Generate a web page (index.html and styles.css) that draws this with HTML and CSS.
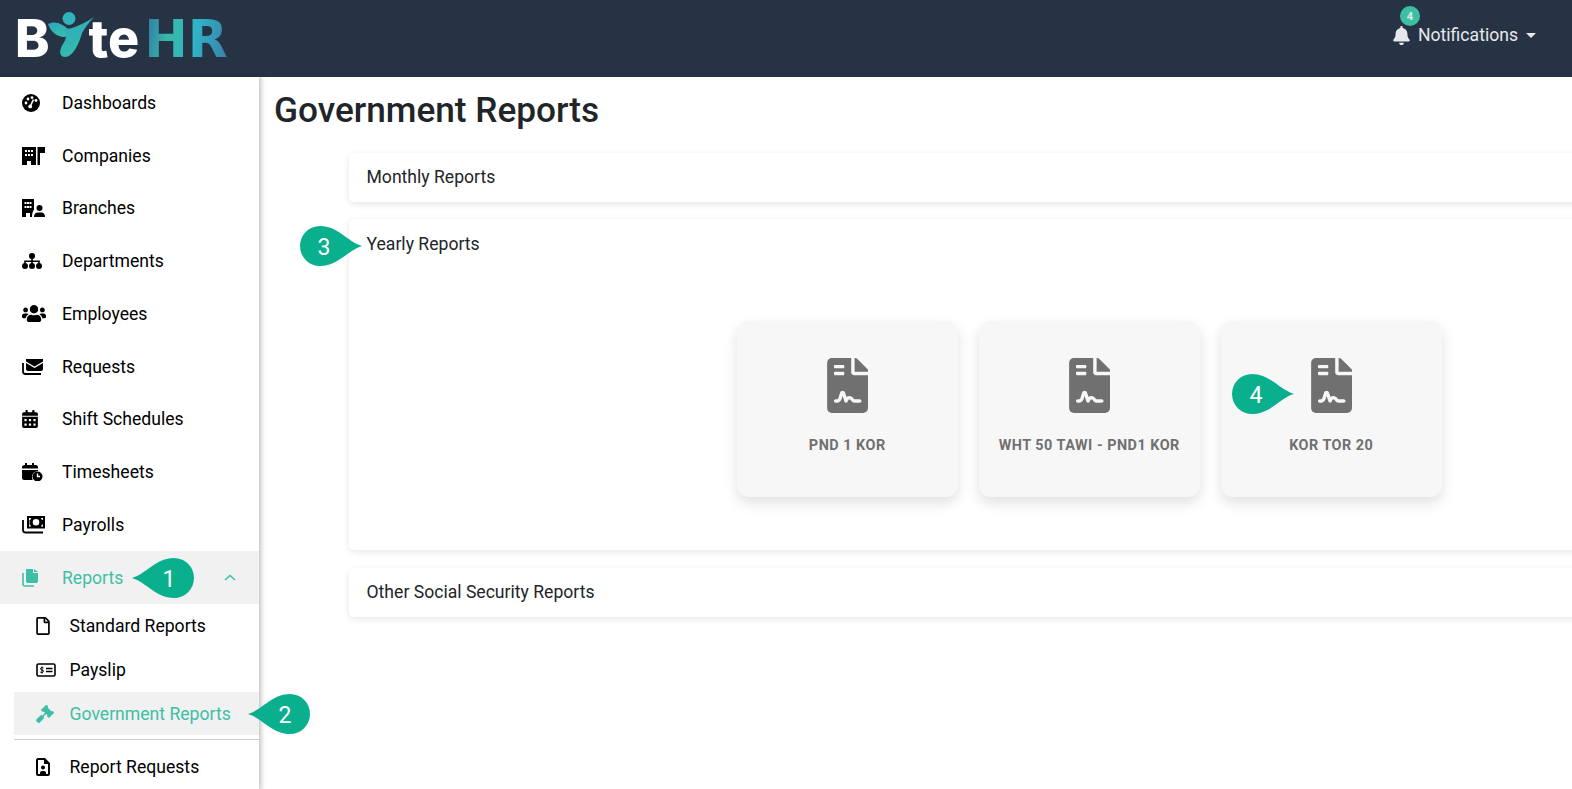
FILE: index.html
```html
<!DOCTYPE html>
<html lang="en">

<head>
    <meta charset="UTF-8">
    <meta name="viewport" content="width=device-width, initial-scale=1.0">
    <title>Government Reports</title>
    <link rel="stylesheet" href="styles.css">
</head>

<body>
    <header class="topbar">
        <div class="logo">
            <span class="logoWhite">B</span>
            <svg class="logoFigure" viewBox="50 12 47 46" width="47" height="46">
                <defs>
                    <linearGradient id="figureGrad" x1="0" y1="0" x2="0.6" y2="1">
                        <stop offset="0" stop-color="#2aa6c4" />
                        <stop offset="1" stop-color="#36bfa8" />
                    </linearGradient>
                </defs>
                <circle cx="72" cy="18.500" r="6.500" fill="#2fb3bd" />
                <path d="M51 24C58 20 66 24 72 30C76 34 72 37 67 37C60 37 54 32 51 24Z" fill="url(#figureGrad)" />
                <path d="M97 17C92 22 88 28 85 33C82 44 76 57 68 57C62 57 62 50 66 44C70 38 70 33 66 29C74 30 86 24 97 17Z" fill="url(#figureGrad)" />
            </svg>
            <span class="logoWhite logoTe">te</span>
            <span class="logoColor">HR</span>
        </div>
        <div class="notify">
            <span class="notifyBadge">4</span>
            <svg class="bell" viewBox="0 0 448 512">
                <path d="M224 512c35.32 0 63.97-28.65 63.97-64H160.03c0 35.35 28.65 64 63.97 64zm215.39-149.71c-19.32-20.76-55.47-51.99-55.47-154.29 0-77.7-54.48-139.9-127.94-155.16V32c0-17.67-14.32-32-31.98-32s-31.98 14.33-31.98 32v20.84C118.56 68.1 64.08 130.3 64.08 208c0 102.3-36.15 133.53-55.47 154.29-6 6.45-8.66 14.16-8.61 21.71.11 16.4 12.98 32 32.1 32h383.8c19.12 0 32-15.6 32.1-32 .05-7.55-2.61-15.27-8.61-21.71z" />
            </svg>
            <span>Notifications</span>
            <span class="caret"></span>
        </div>
    </header>

    <div class="layout">
        <aside class="sidebar">
            <a class="navItem">
                <span class="navIcon">
                    <svg width="18" height="18" viewBox="0 0 18 18">
                        <circle cx="9" cy="9" r="9" />
                        <circle cx="4" cy="9" r="1.4" fill="#fff" />
                        <circle cx="6" cy="5" r="1.4" fill="#fff" />
                        <circle cx="10" cy="3.6" r="1.4" fill="#fff" />
                        <circle cx="14" cy="6.5" r="1.4" fill="#fff" />
                        <path d="M11.5 5.5L8.6 11.5" stroke="#fff" stroke-width="1.6" />
                        <circle cx="8.2" cy="12.4" r="1.9" fill="#fff" />
                    </svg>
                </span>
                Dashboards
            </a>
            <a class="navItem">
                <span class="navIcon">
                    <svg width="23" height="18" viewBox="0 0 23 18">
                        <path fill-rule="evenodd" d="M0 0H14V18H9V14H5V18H0ZM3 3V5H5V3ZM6 3V5H8V3ZM9 3V5H11V3ZM3 7V9H5V7ZM6 7V9H8V7ZM9 7V9H11V7Z" />
                        <path d="M15.5 0H23V6H18V18H15.5Z" />
                    </svg>
                </span>
                Companies
            </a>
            <a class="navItem">
                <span class="navIcon">
                    <svg width="23" height="18" viewBox="0 0 23 18">
                        <path fill-rule="evenodd" d="M0 0H12V10.5C11 12 10 14 10 18H8V14H4V18H0ZM2.5 3V5H4.500V3ZM5 3V5H7V3ZM7.500 3V5H9.500V3ZM2.500 7V9H4.500V7ZM5 7V9H7V7ZM7.500 7V9H9.500V7Z" />
                        <circle cx="17.500" cy="9" r="3" />
                        <path d="M12 18C12 15 13.500 13.500 15.500 13.500H19.500C21.500 13.500 23 15 23 18Z" />
                    </svg>
                </span>
                Branches
            </a>
            <a class="navItem">
                <span class="navIcon">
                    <svg width="20" height="16" viewBox="0 0 20 16">
                        <circle cx="10" cy="3" r="3" />
                        <circle cx="3" cy="13" r="3" />
                        <circle cx="10" cy="13" r="3" />
                        <circle cx="17" cy="13" r="3" />
                        <path d="M9.200 5H10.800V7.500H17.800V11H16.200V9H10.800V11H9.200V9H3.800V11H2.200V7.500H9.200Z" />
                    </svg>
                </span>
                Departments
            </a>
            <a class="navItem">
                <span class="navIcon">
                    <svg width="24" height="17" viewBox="0 32 640 448">
                        <path d="M96 224c35.3 0 64-28.7 64-64s-28.7-64-64-64-64 28.7-64 64 28.7 64 64 64zm448 0c35.3 0 64-28.7 64-64s-28.7-64-64-64-64 28.7-64 64 28.7 64 64 64zm32 32h-64c-17.6 0-33.5 7.1-45.1 18.6 40.3 22.1 68.9 62 75.1 109.4h66c17.7 0 32-14.3 32-32v-32c0-35.3-28.7-64-64-64zm-256 0c61.9 0 112-50.1 112-112S381.900 32 320 32 208 82.100 208 144s50.100 112 112 112zm76.800 32h-8.300c-20.800 10-43.900 16-68.500 16s-47.600-6-68.500-16h-8.300C179.600 288 128 339.600 128 403.200V432c0 26.500 21.500 48 48 48h288c26.500 0 48-21.500 48-48v-28.800c0-63.600-51.600-115.200-115.200-115.200zm-223.700-13.400C161.500 263.100 145.600 256 128 256H64c-35.300 0-64 28.700-64 64v32c0 17.700 14.300 32 32 32h65.900c6.300-47.400 34.900-87.300 75.200-109.400z" />
                    </svg>
                </span>
                Employees
            </a>
            <a class="navItem">
                <span class="navIcon">
                    <svg width="21" height="16" viewBox="0 0 21 16">
                        <path d="M4 0H21V2.500L12.500 7.500L4 2.500Z" />
                        <path d="M4 4L12.500 9L21 4V10C21 11 20 12 19 12H6C5 12 4 11 4 10Z" />
                        <path d="M1 4V12.500C1 14 2 15 3.500 15H19" fill="none" stroke="#000" stroke-width="1.800" />
                    </svg>
                </span>
                Requests
            </a>
            <a class="navItem">
                <span class="navIcon">
                    <svg width="16" height="18" viewBox="0 0 448 512">
                        <path d="M0 464c0 26.5 21.5 48 48 48h352c26.5 0 48-21.5 48-48V192H0v272zm320-196c0-6.6 5.4-12 12-12h40c6.6 0 12 5.4 12 12v40c0 6.6-5.4 12-12 12h-40c-6.6 0-12-5.4-12-12v-40zm0 128c0-6.6 5.4-12 12-12h40c6.6 0 12 5.4 12 12v40c0 6.6-5.4 12-12 12h-40c-6.6 0-12-5.4-12-12v-40zM192 268c0-6.6 5.4-12 12-12h40c6.6 0 12 5.4 12 12v40c0 6.6-5.4 12-12 12h-40c-6.6 0-12-5.4-12-12v-40zm0 128c0-6.6 5.4-12 12-12h40c6.6 0 12 5.4 12 12v40c0 6.6-5.4 12-12 12h-40c-6.6 0-12-5.4-12-12v-40zM64 268c0-6.6 5.4-12 12-12h40c6.6 0 12 5.4 12 12v40c0 6.6-5.4 12-12 12H76c-6.6 0-12-5.4-12-12v-40zm0 128c0-6.6 5.4-12 12-12h40c6.6 0 12 5.4 12 12v40c0 6.6-5.4 12-12 12H76c-6.6 0-12-5.4-12-12v-40zM400 64h-48V16c0-8.8-7.2-16-16-16h-32c-8.8 0-16 7.2-16 16v48H160V16c0-8.8-7.2-16-16-16h-32c-8.8 0-16 7.2-16 16v48H48C21.5 64 0 85.5 0 112v48h448v-48c0-26.5-21.5-48-48-48z" />
                    </svg>
                </span>
                Shift Schedules
            </a>
            <a class="navItem">
                <span class="navIcon">
                    <svg width="21" height="18" viewBox="0 0 21 18">
                        <path d="M3 0H5V2H10V0H12V2H14C15 2 16 3 16 4V5.500H0V4C0 3 1 2 3 2Z" />
                        <path d="M0 7H16V8C12 8.500 10 11 10 14C10 15 10.300 16 10.700 17H2C1 17 0 16 0 15Z" />
                        <circle cx="15.500" cy="13.500" r="5" />
                        <path d="M15.500 10.500V13.500H18" fill="none" stroke="#fff" stroke-width="1.400" />
                    </svg>
                </span>
                Timesheets
            </a>
            <a class="navItem">
                <span class="navIcon">
                    <svg width="23" height="18" viewBox="0 0 23 18">
                        <path fill-rule="evenodd" d="M5 0H23V12.500H5ZM7 2V10.500H9C9 9.500 8 9 7.500 8.500V4C8.500 4 9 3 9 2ZM19 2C19 3 20 4 21 4V8.500C20 8.500 19 9.500 19 10.500H21V2ZM14 3A3.200 3.200 0 1 0 14 9.600A3.200 3.200 0 1 0 14 3Z" />
                        <path d="M1 4V14C1 15.500 2 16.500 3.500 16.500H21" fill="none" stroke="#000" stroke-width="1.800" />
                    </svg>
                </span>
                Payrolls
            </a>
            <a class="navItem navItemActive">
                <span class="navIcon">
                    <svg width="16" height="18" viewBox="0 0 16 18" fill="#3dbfa6">
                        <path d="M5 0H11V4H16V12C16 13.500 15 14 14 14H6.500C5 14 4 13.500 4 12V1C4 .5 4.500 0 5 0Z" />
                        <path d="M12 0L16 3H12Z" />
                        <path d="M1 4V15C1 16 2 17 3 17H12" fill="none" stroke="#3dbfa6" stroke-width="1.600" />
                    </svg>
                </span>
                Reports
                <svg class="chevron" width="12" height="7" viewBox="0 0 12 7">
                    <path d="M1 6L6 1.500L11 6" fill="none" stroke="#3dbfa6" stroke-width="1.500" />
                </svg>
            </a>
            <div class="subNav">
                <a class="subItem">
                    <span class="subIcon">
                        <svg width="14" height="18" viewBox="0 0 384 512">
                            <path d="M369.900 97.900L286 14C277 5 264.800-.1 252.100-.1H48C21.500 0 0 21.500 0 48v416c0 26.500 21.500 48 48 48h288c26.500 0 48-21.500 48-48V131.900c0-12.700-5.100-25-14.100-34zM332.100 128H256V51.900l76.100 76.100zM48 464V48h160v104c0 13.300 10.700 24 24 24h104v288H48z" />
                        </svg>
                    </span>
                    Standard Reports
                </a>
                <a class="subItem">
                    <span class="subIcon">
                        <svg width="20" height="14" viewBox="0 0 20 14">
                            <rect x="1" y="1" width="18" height="12" rx="1.500" fill="none" stroke="#000" stroke-width="1.600" />
                            <path d="M7.500 5C6 4 4.500 4.500 4.500 5.800C4.500 7.400 7.500 6.600 7.500 8.200C7.500 9.500 5.500 10 4.200 9M6 3.500V10.500" fill="none" stroke="#000" stroke-width="1" />
                            <path d="M10 5.500H16.500M10 8.500H16.500" stroke="#000" stroke-width="1.500" />
                        </svg>
                    </span>
                    Payslip
                </a>
                <a class="subItem subItemActive">
                    <span class="subIcon">
                        <svg width="18" height="18" viewBox="0 0 512 512" fill="#3dbfa6">
                            <path d="M504.971 199.362l-22.627-22.627c-9.373-9.373-24.569-9.373-33.941 0l-5.657 5.657L329.608 69.255l5.657-5.657c9.373-9.373 9.373-24.569 0-33.941L312.638 7.029c-9.373-9.373-24.569-9.373-33.941 0L154.246 131.480c-9.373 9.373-9.373 24.569 0 33.941l22.627 22.627c9.373 9.373 24.569 9.373 33.941 0l5.657-5.657 39.598 39.598-81.040 81.040-5.657-5.657c-12.497-12.497-32.758-12.497-45.255 0L9.373 412.118c-12.497 12.497-12.497 32.758 0 45.255l45.255 45.255c12.497 12.497 32.758 12.497 45.255 0l114.745-114.745c12.497-12.497 12.497-32.758 0-45.255l-5.657-5.657 81.040-81.040 39.598 39.598-5.657 5.657c-9.373 9.373-9.373 24.569 0 33.941l22.627 22.627c9.373 9.373 24.569 9.373 33.941 0l124.451-124.451c9.372-9.372 9.372-24.568 0-33.941z" />
                        </svg>
                    </span>
                    Government Reports
                </a>
                <hr class="subDivider">
                <a class="subItem">
                    <span class="subIcon">
                        <svg width="14" height="18" viewBox="0 0 14 18">
                            <path fill-rule="evenodd" d="M2 0H9L14 5V16C14 17 13 18 12 18H2C1 18 0 17 0 16V2C0 1 1 0 2 0ZM2 2V16H4V15C4 13.500 5 13 7 13C9 13 10 13.500 10 15V16H12V6H8V2ZM7 7.500A2 2 0 1 0 7 11.500A2 2 0 1 0 7 7.500Z" />
                        </svg>
                    </span>
                    Report Requests
                </a>
            </div>
        </aside>

        <main class="main">
            <h1 class="pageTitle">Government Reports</h1>

            <section class="panel">
                <div class="panelTitle">Monthly Reports</div>
            </section>

            <section class="panel panelOpen">
                <div class="panelTitle">Yearly Reports</div>
                <div class="cardRow">
                    <div class="reportCard">
                        <svg class="cardIcon" viewBox="0 0 384 512">
                            <path d="M224 136V0H24C10.700 0 0 10.700 0 24v464c0 13.300 10.700 24 24 24h336c13.300 0 24-10.700 24-24V160H248c-13.200 0-24-10.800-24-24zM64 72c0-4.420 3.580-8 8-8h80c4.420 0 8 3.580 8 8v16c0 4.420-3.580 8-8 8H72c-4.420 0-8-3.580-8-8V72zm0 64c0-4.420 3.580-8 8-8h80c4.420 0 8 3.580 8 8v16c0 4.420-3.580 8-8 8H72c-4.420 0-8-3.580-8-8v-16zm192.810 248H304c8.840 0 16 7.160 16 16s-7.160 16-16 16h-47.190c-16.450 0-31.270-9.140-38.640-23.860-2.950-5.920-8.090-6.520-10.170-6.520s-7.220.59-10.020 6.190l-7.670 15.340a15.986 15.986 0 0 1-14.310 8.840c-.38 0-.75-.02-1.140-.05-6.450-.45-12-4.750-14.030-10.890L144 354.590l-10.610 31.880c-5.890 17.660-22.380 29.530-41 29.530H80c-8.840 0-16-7.160-16-16s7.160-16 16-16h12.390c4.830 0 9.110-3.080 10.640-7.660l18.190-54.640c3.300-9.810 12.440-16.410 22.780-16.410s19.480 6.590 22.770 16.410l13.880 41.640c19.770-16.190 54.050-9.700 66 14.160 2.020 4.060 5.960 6.500 10.160 6.500zM377 105L279.100 7c-4.500-4.500-10.600-7-17-7H256v128h128v-6.100c0-6.300-2.500-12.400-7-16.900z" />
                        </svg>
                        <div class="cardLabel">PND 1 KOR</div>
                    </div>
                    <div class="reportCard">
                        <svg class="cardIcon" viewBox="0 0 384 512">
                            <path d="M224 136V0H24C10.700 0 0 10.700 0 24v464c0 13.300 10.700 24 24 24h336c13.300 0 24-10.700 24-24V160H248c-13.200 0-24-10.800-24-24zM64 72c0-4.420 3.580-8 8-8h80c4.420 0 8 3.580 8 8v16c0 4.420-3.580 8-8 8H72c-4.420 0-8-3.580-8-8V72zm0 64c0-4.420 3.580-8 8-8h80c4.420 0 8 3.580 8 8v16c0 4.420-3.580 8-8 8H72c-4.420 0-8-3.580-8-8v-16zm192.810 248H304c8.840 0 16 7.160 16 16s-7.160 16-16 16h-47.190c-16.450 0-31.270-9.140-38.640-23.860-2.950-5.920-8.090-6.520-10.170-6.520s-7.220.59-10.020 6.190l-7.670 15.340a15.986 15.986 0 0 1-14.310 8.840c-.38 0-.75-.02-1.140-.05-6.450-.45-12-4.750-14.030-10.890L144 354.590l-10.610 31.880c-5.890 17.660-22.380 29.530-41 29.530H80c-8.840 0-16-7.160-16-16s7.160-16 16-16h12.390c4.830 0 9.110-3.080 10.640-7.660l18.190-54.640c3.300-9.810 12.440-16.410 22.780-16.410s19.480 6.590 22.770 16.410l13.880 41.640c19.770-16.190 54.050-9.700 66 14.160 2.020 4.060 5.960 6.500 10.160 6.500zM377 105L279.100 7c-4.500-4.500-10.600-7-17-7H256v128h128v-6.100c0-6.300-2.500-12.400-7-16.900z" />
                        </svg>
                        <div class="cardLabel">WHT 50 TAWI - PND1 KOR</div>
                    </div>
                    <div class="reportCard">
                        <svg class="cardIcon" viewBox="0 0 384 512">
                            <path d="M224 136V0H24C10.700 0 0 10.700 0 24v464c0 13.300 10.700 24 24 24h336c13.300 0 24-10.700 24-24V160H248c-13.200 0-24-10.800-24-24zM64 72c0-4.420 3.580-8 8-8h80c4.420 0 8 3.580 8 8v16c0 4.420-3.580 8-8 8H72c-4.420 0-8-3.580-8-8V72zm0 64c0-4.420 3.580-8 8-8h80c4.420 0 8 3.580 8 8v16c0 4.420-3.580 8-8 8H72c-4.420 0-8-3.580-8-8v-16zm192.810 248H304c8.840 0 16 7.160 16 16s-7.160 16-16 16h-47.190c-16.450 0-31.270-9.140-38.640-23.860-2.950-5.920-8.090-6.520-10.170-6.520s-7.220.59-10.020 6.190l-7.670 15.340a15.986 15.986 0 0 1-14.310 8.840c-.38 0-.75-.02-1.140-.05-6.450-.45-12-4.750-14.030-10.890L144 354.590l-10.610 31.880c-5.890 17.660-22.380 29.530-41 29.530H80c-8.840 0-16-7.160-16-16s7.160-16 16-16h12.390c4.830 0 9.110-3.080 10.640-7.660l18.190-54.640c3.300-9.810 12.440-16.410 22.780-16.410s19.480 6.590 22.770 16.410l13.880 41.640c19.770-16.190 54.050-9.700 66 14.160 2.020 4.060 5.960 6.500 10.160 6.500zM377 105L279.100 7c-4.500-4.500-10.600-7-17-7H256v128h128v-6.100c0-6.300-2.500-12.400-7-16.900z" />
                        </svg>
                        <div class="cardLabel">KOR TOR 20</div>
                    </div>
                </div>
            </section>

            <section class="panel">
                <div class="panelTitle">Other Social Security Reports</div>
            </section>
        </main>
    </div>

    <!-- Step markers laid over the page -->
    <div class="callout calloutLeft" id="step1">
        <svg viewBox="0 0 62 40"><path d="M0 20C14 16 24 0 42 0A20 20 0 0 1 42 40C24 40 14 24 0 20Z" /></svg>
        <span>1</span>
    </div>
    <div class="callout calloutLeft" id="step2">
        <svg viewBox="0 0 62 40"><path d="M0 20C14 16 24 0 42 0A20 20 0 0 1 42 40C24 40 14 24 0 20Z" /></svg>
        <span>2</span>
    </div>
    <div class="callout calloutRight" id="step3">
        <svg viewBox="0 0 62 40"><path d="M62 20C48 16 38 0 20 0A20 20 0 0 0 20 40C38 40 48 24 62 20Z" /></svg>
        <span>3</span>
    </div>
    <div class="callout calloutRight" id="step4">
        <svg viewBox="0 0 62 40"><path d="M62 20C48 16 38 0 20 0A20 20 0 0 0 20 40C38 40 48 24 62 20Z" /></svg>
        <span>4</span>
    </div>
</body>

</html>
```

FILE: styles.css
```css
* {
    box-sizing: border-box;
}

html,
body {
    margin: 0;
    height: 789px;
    overflow: hidden;
}

body {
    font-family: Roboto, "Liberation Sans", sans-serif;
    font-size: 17.6px;
    color: #000;
    background-color: #fff;
    position: relative;
}

.topbar {
    height: 76.6px;
    background-color: #263345;
    display: flex;
    justify-content: space-between;
    align-items: flex-start;
}

.logo {
    display: flex;
    align-items: flex-start;
    margin-left: 15px;
    margin-top: 12px;
    font-family: Inter, sans-serif;
    font-weight: 800;
    font-size: 52px;
    line-height: 46px;
    height: 46px;
}

.logoWhite {
    color: #fff;
    padding-top: 4px;
}

.logoFigure {
    margin-left: -3px;
    flex-shrink: 0;
}

.logoTe {
    margin-left: -5px;
}

.logoColor {
    margin-left: 5px;
    padding-top: 4px;
    font-family: "DejaVu Sans", sans-serif;
    font-weight: 700;
    background: linear-gradient(100deg, #2f6fa8 0%, #38b8a6 30%, #2fb3c8 60%, #3a7fa5 100%);
    -webkit-background-clip: text;
    background-clip: text;
    color: transparent;
}

.notify {
    position: relative;
    display: flex;
    align-items: center;
    gap: 8px;
    height: 20px;
    margin-top: 25px;
    margin-right: 36px;
    color: #e6e8ea;
}

.bell {
    width: 17px;
    height: 19px;
    fill: #e6e8ea;
}

.notifyBadge {
    position: absolute;
    left: 7px;
    top: -19px;
    width: 20px;
    height: 20px;
    border-radius: 50%;
    background-color: #3dbfa6;
    color: #e6e8ea;
    font-size: 11px;
    font-weight: 700;
    display: flex;
    align-items: center;
    justify-content: center;
}

.caret {
    margin-left: 0;
    width: 0;
    height: 0;
    border-left: 5px solid transparent;
    border-right: 5px solid transparent;
    border-top: 5px solid #e6e8ea;
}

.layout {
    display: flex;
    height: 713px;
}

.sidebar {
    width: 259px;
    flex-shrink: 0;
    background-color: #fff;
    box-shadow: 2px 0 5px rgba(0, 0, 0, 0.25);
    position: relative;
}

.navItem {
    height: 52.75px;
    display: flex;
    align-items: center;
    padding-left: 22px;
}

.navIcon {
    width: 40px;
    flex-shrink: 0;
    display: flex;
    align-items: center;
}

.navItemActive {
    background-color: #f1f1f1;
    color: #3dbfa6;
}

.chevron {
    margin-left: auto;
    margin-right: 23px;
}

.subItem {
    height: 43.8px;
    display: flex;
    align-items: center;
    padding-left: 36px;
}

.subIcon {
    width: 33.5px;
    flex-shrink: 0;
    display: flex;
    align-items: center;
}

.subItemActive {
    margin-left: 14px;
    padding-left: 22px;
    background-color: #f1f1f1;
    color: #3dbfa6;
}

.subDivider {
    margin: 4px 0 5px 14px;
    border: none;
    border-top: 1px solid #ccc;
}

.main {
    flex: 1;
    min-width: 0;
    padding-left: 15px;
}

.pageTitle {
    margin: 0;
    padding-top: 12px;
    height: 76.2px;
    font-size: 35.2px;
    font-weight: 500;
    line-height: 42px;
    color: #212529;
}

.panel {
    margin-left: 75px;
    margin-right: -40px;
    margin-bottom: 17px;
    height: 49px;
    background-color: #fff;
    border-radius: 5px;
    box-shadow: 0 2px 6px rgba(38, 51, 69, 0.12);
}

.panelOpen {
    height: 331px;
    margin-bottom: 18px;
}

.panelTitle {
    height: 48px;
    padding-left: 17.5px;
    display: flex;
    align-items: center;
    color: #212529;
}

.panelOpen .panelTitle {
    height: 50px;
}

.cardRow {
    display: flex;
    gap: 21.5px;
    padding-top: 52px;
    padding-left: 388px;
}

.reportCard {
    width: 220.5px;
    height: 176px;
    background-color: #f7f7f7;
    border-radius: 12px;
    box-shadow: 0 6px 14px rgba(0, 0, 0, 0.12);
    padding-top: 37px;
    display: flex;
    flex-direction: column;
    align-items: center;
}

.cardIcon {
    width: 41.5px;
    height: 55px;
    fill: #707070;
    border-radius: 5px;
    overflow: hidden;
}

.cardLabel {
    margin-top: 24px;
    font-size: 14.4px;
    font-weight: 700;
    letter-spacing: 0.5px;
    color: #707070;
}

.callout {
    position: absolute;
    width: 62px;
    height: 40px;
    color: #fff;
    font-size: 23px;
}

.callout svg {
    display: block;
    width: 62px;
    height: 40px;
    fill: #0ab08e;
}

.callout span {
    position: absolute;
    top: 1px;
    width: 40px;
    height: 40px;
    display: flex;
    align-items: center;
    justify-content: center;
}

.calloutLeft span {
    right: 5px;
}

.calloutRight span {
    left: 4px;
}

#step1 {
    left: 132px;
    top: 558px;
}

#step2 {
    left: 248px;
    top: 694px;
}

#step3 {
    left: 300px;
    top: 226px;
}

#step4 {
    left: 1232px;
    top: 374px;
}
```
